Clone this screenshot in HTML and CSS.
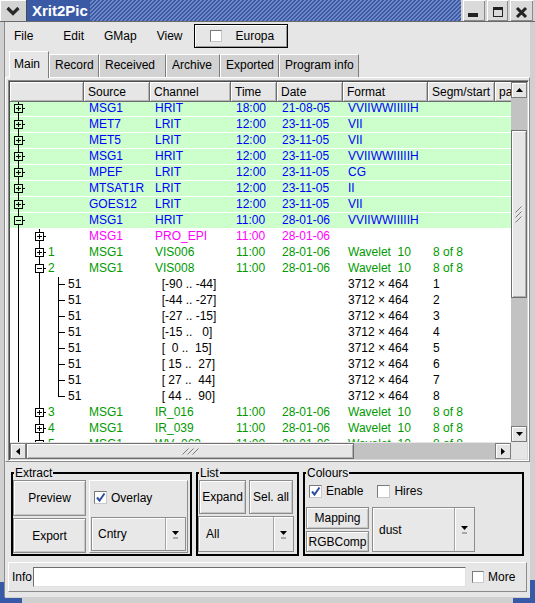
FILE: index.html
```html
<!DOCTYPE html>
<html lang="en">
<head>
  <meta charset="UTF-8">
  <title>Xrit2Pic</title>
  <link rel="stylesheet" href="styles.css">
</head>
<body>
  <!-- tree line pieces, reused by every row -->
  <svg class="defs" width="0" height="0">
    <defs>
      <g id="p1" stroke="#000" fill="none" shape-rendering="crispEdges"><path d="M8.5 0V3M8.5 12V16M4.5 3.5h8v8h-8zM6 7.5h5M8.5 5v5M13 7.5h2"/></g>
      <g id="m1" stroke="#000" fill="none" shape-rendering="crispEdges"><path d="M8.5 0V3M8.5 12V16M4.5 3.5h8v8h-8zM6 7.5h5M13 7.5h2"/></g>
      <g id="v1" stroke="#000" fill="none" shape-rendering="crispEdges"><path d="M8.5 0V16"/></g>
      <g id="p2" stroke="#000" fill="none" shape-rendering="crispEdges"><path d="M29.5 0V3M29.5 12V16M25.5 3.5h8v8h-8zM27 7.5h5M29.5 5v5M34 7.5h2"/></g>
      <g id="m2" stroke="#000" fill="none" shape-rendering="crispEdges"><path d="M29.5 0V3M29.5 12V16M25.5 3.5h8v8h-8zM27 7.5h5M34 7.5h2"/></g>
      <g id="v2" stroke="#000" fill="none" shape-rendering="crispEdges"><path d="M29.5 0V16"/></g>
      <g id="t3" stroke="#000" fill="none" shape-rendering="crispEdges"><path d="M48.5 0V16M49 7.5h6"/></g>
      <g id="e3" stroke="#000" fill="none" shape-rendering="crispEdges"><path d="M48.5 0V8M49 7.5h6"/></g>
    </defs>
  </svg>

  <div class="window">
    <div class="titlebar">
      <div class="tb-menu">
        <svg width="16" height="10"><path d="M2.5 2 L8 7.5 L13.5 2" stroke="#2a2a2a" stroke-width="3.2" fill="none"/></svg>
      </div>
      <div class="title">Xrit2Pic</div>
      <div class="stripes"></div>
      <div class="tb-btns">
        <div class="tb-btn w22"><svg width="22" height="21"><rect x="5" y="13" width="10" height="4" fill="#222"/></svg></div>
        <div class="tb-btn w21"><svg width="21" height="21"><rect x="6.5" y="8.5" width="9" height="8" stroke="#222" fill="none"/><rect x="6" y="7" width="10" height="3" fill="#222"/></svg></div>
        <div class="tb-btn w23"><svg width="23" height="21"><path d="M7 8 L16 17 M16 8 L7 17" stroke="#222" stroke-width="3"/></svg></div>
      </div>
    </div>

    <div class="client">
      <div class="menubar">
        <span class="menu-item file">File</span>
        <span class="menu-item">Edit</span>
        <span class="menu-item">GMap</span>
        <span class="menu-item">View</span>
        <div class="europa"><span class="cb"></span><span>Europa</span></div>
      </div>

      <div class="tabbar">
        <div class="tab active t-main">Main</div>
        <div class="tab t-record">Record</div>
        <div class="tab t-received">Received</div>
        <div class="tab t-archive">Archive</div>
        <div class="tab t-exported">Exported</div>
        <div class="tab t-info">Program info</div>
      </div>

      <div class="pane">
        <div class="listview">
          <div class="lv-head">
            <span></span><span>Source</span><span>Channel</span><span>Time</span><span>Date</span><span>Format</span><span>Segm/start</span><span>path</span>
          </div>

          <div class="lv-body">
            <div class="rows">
              <div class="row hl blue"><span class="tree"><svg width="74" height="16"><use href="#p1"/></svg></span><span>MSG1</span><span>HRIT</span><span>18:00</span><span>21-08-05</span><span>VVIIWWIIIIIH</span><span></span><span></span></div>
              <div class="row hl blue"><span class="tree"><svg width="74" height="16"><use href="#p1"/></svg></span><span>MET7</span><span>LRIT</span><span>12:00</span><span>23-11-05</span><span>VII</span><span></span><span></span></div>
              <div class="row hl blue"><span class="tree"><svg width="74" height="16"><use href="#p1"/></svg></span><span>MET5</span><span>LRIT</span><span>12:00</span><span>23-11-05</span><span>VII</span><span></span><span></span></div>
              <div class="row hl blue"><span class="tree"><svg width="74" height="16"><use href="#p1"/></svg></span><span>MSG1</span><span>HRIT</span><span>12:00</span><span>23-11-05</span><span>VVIIWWIIIIIH</span><span></span><span></span></div>
              <div class="row hl blue"><span class="tree"><svg width="74" height="16"><use href="#p1"/></svg></span><span>MPEF</span><span>LRIT</span><span>12:00</span><span>23-11-05</span><span>CG</span><span></span><span></span></div>
              <div class="row hl blue"><span class="tree"><svg width="74" height="16"><use href="#p1"/></svg></span><span>MTSAT1R</span><span>LRIT</span><span>12:00</span><span>23-11-05</span><span>II</span><span></span><span></span></div>
              <div class="row hl blue"><span class="tree"><svg width="74" height="16"><use href="#p1"/></svg></span><span>GOES12</span><span>LRIT</span><span>12:00</span><span>23-11-05</span><span>VII</span><span></span><span></span></div>
              <div class="row hl blue"><span class="tree"><svg width="74" height="16"><use href="#m1"/></svg></span><span>MSG1</span><span>HRIT</span><span>11:00</span><span>28-01-06</span><span>VVIIWWIIIIIH</span><span></span><span></span></div>

              <div class="row pink"><span class="tree"><svg width="74" height="16"><use href="#v1"/><use href="#p2"/></svg></span><span>MSG1</span><span>PRO_EPI</span><span>11:00</span><span>28-01-06</span><span></span><span></span><span></span></div>
              <div class="row green"><span class="tree"><svg width="38" height="16"><use href="#v1"/><use href="#p2"/></svg><span class="lbl">1</span></span><span>MSG1</span><span>VIS006</span><span>11:00</span><span>28-01-06</span><span>Wavelet  10</span><span>8 of 8</span><span></span></div>
              <div class="row green"><span class="tree"><svg width="38" height="16"><use href="#v1"/><use href="#m2"/></svg><span class="lbl">2</span></span><span>MSG1</span><span>VIS008</span><span>11:00</span><span>28-01-06</span><span>Wavelet  10</span><span>8 of 8</span><span></span></div>

              <div class="row"><span class="tree"><svg width="58" height="16"><use href="#v1"/><use href="#v2"/><use href="#t3"/></svg><span class="lbl">51</span></span><span></span><span>  [-90 .. -44]</span><span></span><span></span><span>3712 × 464</span><span>1</span><span></span></div>
              <div class="row"><span class="tree"><svg width="58" height="16"><use href="#v1"/><use href="#v2"/><use href="#t3"/></svg><span class="lbl">51</span></span><span></span><span>  [-44 .. -27]</span><span></span><span></span><span>3712 × 464</span><span>2</span><span></span></div>
              <div class="row"><span class="tree"><svg width="58" height="16"><use href="#v1"/><use href="#v2"/><use href="#t3"/></svg><span class="lbl">51</span></span><span></span><span>  [-27 .. -15]</span><span></span><span></span><span>3712 × 464</span><span>3</span><span></span></div>
              <div class="row"><span class="tree"><svg width="58" height="16"><use href="#v1"/><use href="#v2"/><use href="#t3"/></svg><span class="lbl">51</span></span><span></span><span>  [-15 ..   0]</span><span></span><span></span><span>3712 × 464</span><span>4</span><span></span></div>
              <div class="row"><span class="tree"><svg width="58" height="16"><use href="#v1"/><use href="#v2"/><use href="#t3"/></svg><span class="lbl">51</span></span><span></span><span>  [  0 ..  15]</span><span></span><span></span><span>3712 × 464</span><span>5</span><span></span></div>
              <div class="row"><span class="tree"><svg width="58" height="16"><use href="#v1"/><use href="#v2"/><use href="#t3"/></svg><span class="lbl">51</span></span><span></span><span>  [ 15 ..  27]</span><span></span><span></span><span>3712 × 464</span><span>6</span><span></span></div>
              <div class="row"><span class="tree"><svg width="58" height="16"><use href="#v1"/><use href="#v2"/><use href="#t3"/></svg><span class="lbl">51</span></span><span></span><span>  [ 27 ..  44]</span><span></span><span></span><span>3712 × 464</span><span>7</span><span></span></div>
              <div class="row"><span class="tree"><svg width="58" height="16"><use href="#v1"/><use href="#v2"/><use href="#e3"/></svg><span class="lbl">51</span></span><span></span><span>  [ 44 ..  90]</span><span></span><span></span><span>3712 × 464</span><span>8</span><span></span></div>

              <div class="row green"><span class="tree"><svg width="38" height="16"><use href="#v1"/><use href="#p2"/></svg><span class="lbl">3</span></span><span>MSG1</span><span>IR_016</span><span>11:00</span><span>28-01-06</span><span>Wavelet  10</span><span>8 of 8</span><span></span></div>
              <div class="row green"><span class="tree"><svg width="38" height="16"><use href="#v1"/><use href="#p2"/></svg><span class="lbl">4</span></span><span>MSG1</span><span>IR_039</span><span>11:00</span><span>28-01-06</span><span>Wavelet  10</span><span>8 of 8</span><span></span></div>
              <div class="row green"><span class="tree"><svg width="38" height="16"><use href="#v1"/><use href="#p2"/></svg><span class="lbl">5</span></span><span>MSG1</span><span>WV_062</span><span>11:00</span><span>28-01-06</span><span>Wavelet  10</span><span>8 of 8</span><span></span></div>
            </div>
          </div>

          <div class="vscroll">
            <div class="sb-btn"><svg width="7" height="4"><polygon points="0,4 7,4 3.5,0" fill="#000"/></svg></div>
            <div class="trough v">
              <div class="thumb vthumb">
                <svg width="8" height="17"><path d="M0.5 6.5L6.5 0.5M0.5 11.5L6.5 5.5M0.5 16.5L6.5 10.5" stroke="#7c7c7c" fill="none"/></svg>
              </div>
            </div>
            <div class="sb-btn"><svg width="7" height="4"><polygon points="0,0 7,0 3.5,4" fill="#000"/></svg></div>
          </div>

          <div class="hscroll">
            <div class="sb-btn"><svg width="4" height="7"><polygon points="4,0 4,7 0,3.5" fill="#000"/></svg></div>
            <div class="trough h">
              <div class="thumb hthumb">
                <svg width="17" height="8"><path d="M0.5 7.5L6.5 1.5M5.5 7.5L11.5 1.5M10.5 7.5L16.5 1.5" stroke="#7c7c7c" fill="none"/></svg>
              </div>
            </div>
            <div class="sb-btn"><svg width="4" height="7"><polygon points="0,0 0,7 4,3.5" fill="#000"/></svg></div>
          </div>
          <div class="corner"></div>
        </div>
      </div>

      <div class="groups">
        <fieldset class="group extract">
          <legend>Extract</legend>
          <div class="extract-body">
            <div class="stack">
              <div class="btn h36">Preview</div>
              <div class="btn h35">Export</div>
            </div>
            <div class="panel">
              <div class="cb-row">
                <span class="cb"><svg width="11" height="11"><path d="M2 5.5L4.5 8.5L9.5 1.5" stroke="#2d4fa0" stroke-width="2" fill="none"/></svg></span>
                <span>Overlay</span>
              </div>
              <div class="combo h34">
                <span class="combo-text">Cntry</span>
                <span class="combo-arrow"><svg width="7" height="9"><polygon points="0,0 7,0 3.5,4" fill="#000"/><rect x="1" y="6" width="5" height="2" fill="#a8a8a8"/></svg></span>
              </div>
            </div>
          </div>
        </fieldset>

        <fieldset class="group list">
          <legend>List</legend>
          <div class="list-body">
            <div class="btn-row">
              <div class="btn b-expand">Expand</div>
              <div class="btn b-selall">Sel. all</div>
            </div>
            <div class="combo c-all">
              <span class="combo-text">All</span>
              <span class="combo-arrow"><svg width="7" height="9"><polygon points="0,0 7,0 3.5,4" fill="#000"/><rect x="1" y="6" width="5" height="2" fill="#a8a8a8"/></svg></span>
            </div>
          </div>
        </fieldset>

        <fieldset class="group colours">
          <legend>Colours</legend>
          <div class="colours-top">
            <span class="cb"><svg width="11" height="11"><path d="M2 5.5L4.5 8.5L9.5 1.5" stroke="#2d4fa0" stroke-width="2" fill="none"/></svg></span>
            <span>Enable</span>
            <span class="cb hires"></span>
            <span>Hires</span>
          </div>
          <div class="colours-bottom">
            <div class="stack2">
              <div class="btn h22">Mapping</div>
              <div class="btn h21">RGBComp</div>
            </div>
            <div class="combo c-dust">
              <span class="combo-text">dust</span>
              <span class="combo-arrow"><svg width="7" height="9"><polygon points="0,0 7,0 3.5,4" fill="#000"/><rect x="1" y="6" width="5" height="2" fill="#a8a8a8"/></svg></span>
            </div>
          </div>
        </fieldset>
      </div>

      <div class="info">
        <span class="info-label">Info</span>
        <div class="field"></div>
        <span class="cb more"></span>
        <span>More</span>
      </div>
    </div>
  </div>
</body>
</html>
```

FILE: styles.css
```css
* { margin:0; padding:0; box-sizing:border-box; }
body {
  width: 535px;
  height: 603px;
  overflow: hidden;
  font-family: "Liberation Sans", Arial, sans-serif;
  font-size: 12px;
  color: #000;
}
.defs { display:block; width:0; height:0; }

.window {
  width: 535px;
  height: 603px;
  display: flex;
  flex-direction: column;
  background:
    linear-gradient(#3659a8, #3659a8) left bottom / 22px 5px no-repeat,
    linear-gradient(#3659a8, #3659a8) left bottom / 5px 21px no-repeat,
    linear-gradient(#3659a8, #3659a8) right bottom / 22px 5px no-repeat,
    linear-gradient(#3659a8, #3659a8) right bottom / 5px 23px no-repeat,
    #d0d0d0;
}

/* title bar */
.titlebar {
  height: 22px;
  display: flex;
  background: #d4d4d4;
  border-bottom: 1px solid #6a6a6a;
}
.tb-menu {
  width: 27px;
  display: flex;
  align-items: center;
  justify-content: center;
  border-right: 1px solid #4a4a4a;
  box-shadow: inset 1px 1px #fff;
}
.title {
  background: #3a5aa6;
  color: #fff;
  font-weight: bold;
  font-size: 15px;
  line-height: 21px;
  padding: 0 2px 0 5px;
}
.stripes {
  flex: 1;
  background: repeating-linear-gradient(135deg, #3a5aa6 0 1.9px, #7089c6 1.9px 2.83px);
}
.tb-btns { display:flex; gap:2px; padding:0 2px; }
.tb-btn {
  background: #dadada;
  box-shadow: inset 1px 1px #fff, inset -1px -1px #8a8a8a;
}
.tb-btn svg { display:block; }
.w22 { width:22px; }
.w21 { width:21px; }
.w23 { width:23px; }

.client {
  flex: 1;
  margin: 0 5px 6px 4px;
  background: #e6e6e6;
  border-left: 1px solid #8a8a8a;
}

/* menu */
.menubar {
  height: 28px;
  display: flex;
  align-items: center;
}
.menu-item { padding: 0 10px; }
.menu-item.file { padding: 0 20px 0 9px; }
.europa {
  width: 94px;
  height: 24px;
  margin-left: 1px;
  display: flex;
  align-items: center;
  gap: 14px;
  padding-left: 15px;
  border: 1px solid #000;
  box-shadow: inset 1px 1px #fff, inset -1px -1px #9a9a9a;
}

.cb {
  width: 13px;
  height: 13px;
  flex: none;
  background: #fff;
  border: 1px solid;
  border-color: #7a7a7a #c8c8c8 #c8c8c8 #7a7a7a;
}
.cb svg { display:block; }
.europa .cb { width:12px; height:12px; }

/* tabs */
.tabbar {
  height: 27px;
  display: flex;
  align-items: flex-end;
  padding-left: 4px;
}
.tab {
  height: 23px;
  line-height: 21px;
  padding-left: 5px;
  background: #d2d2d2;
  border: 1px solid;
  border-color: #fff #7c7c7c transparent #fff;
  border-bottom: none;
  white-space: nowrap;
}
.tab.active {
  height: 27px;
  line-height: 25px;
  padding-left: 4px;
  background: #e6e6e6;
  margin-bottom: -1px;
  position: relative;
  z-index: 1;
}
.t-main { width:40px; }
.t-record { width:50px; }
.t-received { width:67px; }
.t-archive { width:54px; }
.t-exported { width:59px; }
.t-info { width:80px; }

.pane {
  height: 385px;
  border: 1px solid;
  border-color: #fff #8a8a8a #8a8a8a #fff;
  padding: 2px 0 0 2px;
}

/* list view */
.listview {
  height: 381px;
  display: grid;
  grid-template-columns: 501px 16px;
  grid-template-rows: 20px 340px 17px;
  border: 1px solid;
  border-color: #8a8a8a #fff #fff #8a8a8a;
  box-shadow: inset 1px 1px #4a4a4a, inset -1px -1px #d6d6d6;
  padding: 1px;
}
.lv-head, .row {
  display: grid;
  grid-template-columns: 74px 66px 81px 46px 66px 85px 67px 60px;
}
.lv-head {
  overflow: hidden;
  background: #e6e6e6;
}
.lv-head span {
  line-height: 20px;
  padding-left: 4px;
  white-space: nowrap;
  overflow: hidden;
  border-right: 1px solid #6e6e6e;
  border-bottom: 1px solid #6e6e6e;
  box-shadow: inset 1px 1px #fff, inset -1px -1px #b4b4b4;
}
.lv-body {
  overflow: hidden;
  background: #fff;
}
.rows { margin-top: -1px; }
.row {
  height: 16px;
  line-height: 15px;
}
.row > span {
  padding-left: 5px;
  white-space: pre;
  overflow: hidden;
}
.row > .tree {
  padding-left: 0;
  display: flex;
}
.tree svg { display:block; flex:none; }
.hl {
  background: #ccffcc;
  box-shadow: inset 0 -1px #fff;
}
.blue { color: #0000ff; }
.pink { color: #ff00ff; }
.green { color: #009a00; }

/* scroll bars */
.vscroll {
  grid-row: 1 / 3;
  grid-column: 2;
  display: flex;
  flex-direction: column;
}
.hscroll {
  grid-row: 3;
  grid-column: 1;
  display: flex;
  padding-top: 1px;
  background: #e6e6e6;
}
.corner { background:#e6e6e6; }
.sb-btn {
  width: 16px;
  height: 16px;
  flex: none;
  display: flex;
  align-items: center;
  justify-content: center;
  background: #e4e4e4;
  border: 1px solid #7c7c7c;
  box-shadow: inset 1px 1px #fff;
}
.sb-btn svg { display:block; }
.trough {
  flex: 1;
  background: #c2c2c2;
  display: flex;
}
.trough.v { flex-direction: column; padding-top: 32px; }
.thumb {
  background: #e6e6e6;
  border: 1px solid #6e6e6e;
  box-shadow: inset 1px 1px #fff, inset -1px -1px #b0b0b0;
  display: flex;
  align-items: center;
  justify-content: center;
}
.vthumb { height: 168px; }
.hthumb { width: 328px; }

/* group boxes */
.groups {
  display: flex;
  gap: 4px;
  padding: 4px 0 0 6px;
}
.group {
  border: 2px solid #000;
  padding: 0;
  min-width: 0;
}
.group legend {
  margin-left: 1px;
  padding: 0 1px;
  line-height: 14px;
}
.extract { width:181px; }
.list { width:103px; }
.colours { width:221px; }

.btn {
  display: flex;
  align-items: center;
  justify-content: center;
  background: #e8e8e8;
  border: 1px solid #8c8c8c;
  box-shadow: inset 1px 1px #fff, inset -1px -1px #c6c6c6;
  white-space: nowrap;
}
.extract-body {
  height: 74px;
  display: flex;
  gap: 3px;
}
.stack {
  width: 73px;
  display: flex;
  flex-direction: column;
  gap: 2px;
}
.h36 { height:36px; }
.h35 { height:35px; }
.h34 { height:34px; }
.h22 { height:22px; }
.h21 { height:21px; }
.panel {
  width: 99px;
  height: 73px;
  border: 1px solid;
  border-color: #fff #8c8c8c #8c8c8c #fff;
  padding: 0 1px 1px 1px;
  display: flex;
  flex-direction: column;
}
.cb-row {
  height: 36px;
  display: flex;
  align-items: center;
  gap: 4px;
  padding: 0 0 3px 3px;
}

.combo {
  display: flex;
  background: #e8e8e8;
  border: 1px solid #8c8c8c;
  box-shadow: inset 1px 1px #fff;
}
.combo-text {
  flex: 1;
  display: flex;
  align-items: center;
  padding-left: 6px;
}
.combo-arrow {
  width: 20px;
  display: flex;
  align-items: center;
  justify-content: center;
  border-left: 1px solid #a4a4a4;
  box-shadow: inset 1px 0 #fff;
}
.combo-arrow svg { display:block; margin-top:2px; }

.list-body {
  display: flex;
  flex-direction: column;
  gap: 2px;
}
.btn-row {
  display: flex;
  gap: 3px;
  margin-left: 1px;
  height: 34px;
}
.b-expand { width:47px; }
.b-selall { width:44px; }
.c-all { width:96px; height:36px; }
.c-all .combo-text { padding-left:7px; }

.colours-top {
  height: 22px;
  display: flex;
  align-items: center;
  gap: 4px;
  padding-left: 4px;
}
.cb.hires { margin-left: 10px; }
.colours-bottom {
  display: flex;
  gap: 3px;
  margin: 5px 0 0 1px;
}
.stack2 {
  width: 63px;
  display: flex;
  flex-direction: column;
  gap: 2px;
}
.c-dust { width:103px; height:45px; }

/* info line */
.info {
  width: 519px;
  height: 30px;
  margin: 6px 0 0 3px;
  display: flex;
  align-items: center;
  padding-left: 3px;
  border: 1px solid;
  border-color: #fff #8a8a8a #8a8a8a #fff;
}
.info-label { width: 21px; }
.field {
  width: 433px;
  height: 20px;
  background: #fff;
  border: 1px solid;
  border-color: #6e6e6e #e0e0e0 #e0e0e0 #6e6e6e;
}
.cb.more { margin: 0 4px 0 6px; width:12px; height:12px; }
```
